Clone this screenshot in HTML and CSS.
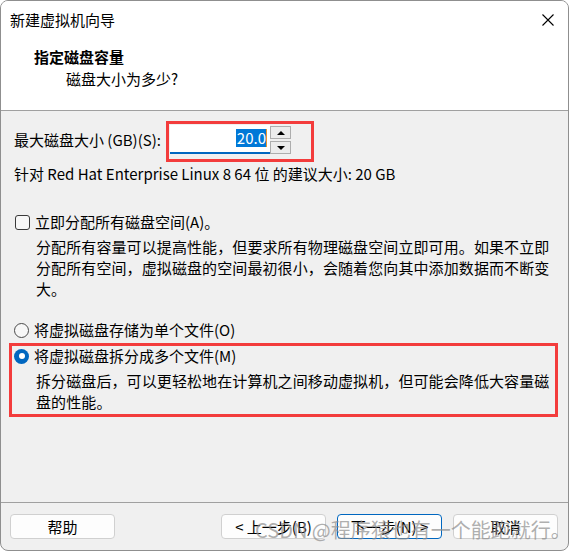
FILE: index.html
```html
<!DOCTYPE html>
<html lang="zh-CN">
<head>
<meta charset="utf-8">
<title>新建虚拟机向导</title>
<link rel="stylesheet" href="styles.css">
</head>
<body>
<div class="window">
  <div class="header">
    <div class="titlebar">
      <span class="title">新建虚拟机向导</span>
      <svg class="close" width="12" height="12" viewBox="0 0 12 12"><path d="M0.5 0.5L11.5 11.5M11.5 0.5L0.5 11.5" stroke="#000" stroke-width="1.1" fill="none"/></svg>
    </div>
    <div class="heading">指定磁盘容量</div>
    <div class="subheading">磁盘大小为多少?</div>
  </div>

  <div class="body">
    <div class="size-row">
      <span class="size-label">最大磁盘大小 (GB)(S):</span>
      <div class="spin">
        <div class="spin-input"><span class="sel">20.0</span><span class="caret"></span></div>
        <div class="spin-btns">
          <div class="spin-btn"><span class="tri-up"></span></div>
          <div class="spin-btn"><span class="tri-down"></span></div>
        </div>
        <div class="mark mark-spin"></div>
      </div>
    </div>

    <div class="recommend">针对 Red Hat Enterprise Linux 8 64 位 的建议大小: 20 GB</div>

    <div class="option check-row"><span class="checkbox"></span><span>立即分配所有磁盘空间(A)。</span></div>
    <p class="desc">分配所有容量可以提高性能，但要求所有物理磁盘空间立即可用。如果不立即<br>分配所有空间，虚拟磁盘的空间最初很小，会随着您向其中添加数据而不断变<br>大。</p>

    <div class="option radio-row first-radio"><span class="radio"></span><span>将虚拟磁盘存储为单个文件(O)</span></div>

    <div class="group">
      <div class="option radio-row"><span class="radio checked"></span><span>将虚拟磁盘拆分成多个文件(M)</span></div>
      <p class="desc desc-split">拆分磁盘后，可以更轻松地在计算机之间移动虚拟机，但可能会降低大容量磁<br>盘的性能。</p>
      <div class="mark mark-group"></div>
    </div>
  </div>

  <div class="footer">
    <button class="btn">帮助</button>
    <div class="spacer"></div>
    <button class="btn">&lt; 上一步(B)</button>
    <button class="btn primary">下一步(N) &gt;</button>
    <button class="btn">取消</button>
    <div class="watermark">CSDN @程序猿也有一个能跑就行。</div>
  </div>
</div>
</body>
</html>
```

FILE: styles.css
```css
* { box-sizing: border-box; }

html, body {
  margin: 0;
  padding: 0;
  background: #ffffff;
}

body {
  font-family: "Noto Sans CJK SC", "Noto Sans", sans-serif;
  font-size: 15px;
  color: #000;
}

.window {
  width: 569px;
  height: 551px;
  border: 1px solid #8f8f8f;
  border-radius: 8px;
  overflow: hidden;
  display: flex;
  flex-direction: column;
  background: #f0f0f0;
}

/* header */
.header {
  flex: none;
  height: 110px;
  background: #ffffff;
  border-bottom: 1px solid #a0a0a0;
}

.titlebar {
  height: 38px;
  display: flex;
  align-items: center;
  justify-content: space-between;
  padding: 0 14px 0 9px;
}

.title {
  line-height: 20px;
}

.close {
  display: block;
}

.heading {
  margin-top: 7px;
  padding-left: 33px;
  line-height: 22px;
  font-weight: bold;
}

.subheading {
  padding-left: 65px;
  line-height: 22px;
}

/* body */
.body {
  flex: 1;
  padding: 14px 0 0 13px;
}

.size-row {
  display: flex;
  align-items: center;
  height: 29px;
}

.size-label {
  width: 156px;
  line-height: 20px;
}

.spin {
  position: relative;
  display: flex;
  height: 29px;
}

.spin-input {
  width: 100px;
  height: 29px;
  background: #ffffff;
  border-bottom: 2px solid #0067c0;
  display: flex;
  justify-content: flex-end;
  align-items: center;
  padding: 0 3px 1px 0;
}

.sel {
  background: #0078d7;
  color: #ffffff;
  line-height: 18px;
  padding: 0 0 0 1px;
}

.caret {
  width: 1px;
  height: 18px;
  background: #e8932c;
}

.spin-btns {
  width: 21px;
  display: flex;
  flex-direction: column;
  gap: 2px;
  padding-top: 1px;
}

.spin-btn {
  height: 13px;
  border: 1px solid #adadad;
  background: #ececec;
  display: flex;
  align-items: center;
  justify-content: center;
}

.tri-up {
  width: 0;
  height: 0;
  border-left: 4px solid transparent;
  border-right: 4px solid transparent;
  border-bottom: 4px solid #000;
}

.tri-down {
  width: 0;
  height: 0;
  border-left: 4px solid transparent;
  border-right: 4px solid transparent;
  border-top: 4px solid #000;
}

.mark {
  position: absolute;
  border: 3px solid #f33c3c;
  pointer-events: none;
}

.mark-spin {
  left: -4px;
  top: -4px;
  width: 148px;
  height: 41px;
}

.recommend {
  margin-top: 10px;
  line-height: 20px;
}

.option {
  display: flex;
  align-items: center;
  line-height: 20px;
}

.check-row {
  margin-top: 28px;
}

.checkbox {
  width: 15px;
  height: 15px;
  border: 1px solid #3a3a3a;
  border-radius: 3px;
  background: #f7f7f7;
  margin: 0 5px 0 1px;
  flex: none;
}

.desc {
  margin: 4px 0 0 0;
  padding-left: 22px;
  line-height: 21px;
  letter-spacing: 0.1px;
}

.radio-row .radio {
  width: 15px;
  height: 15px;
  border-radius: 50%;
  border: 1px solid #4a4a4a;
  background: #f7f7f7;
  margin: 0 5px 0 0;
  flex: none;
}

.radio.checked {
  border: none;
  background: #0067c0;
  display: flex;
  align-items: center;
  justify-content: center;
}

.radio.checked::after {
  content: "";
  width: 6px;
  height: 6px;
  border-radius: 50%;
  background: #ffffff;
}

.first-radio {
  margin-top: 21px;
}

.group {
  position: relative;
  margin-top: 6px;
}

.mark-group {
  left: -5px;
  top: -3px;
  right: 10px;
  bottom: -5px;
}

/* footer */
.footer {
  position: relative;
  flex: none;
  height: 48px;
  border-top: 1px solid #a0a0a0;
  display: flex;
  align-items: flex-start;
  gap: 11px;
  padding: 11px 10px 0 9px;
}

.spacer {
  flex: 1;
}

.btn {
  width: 105px;
  height: 25px;
  border: 1px solid #d0d0d0;
  border-radius: 4px;
  background: #fdfdfd;
  font-family: "Noto Sans CJK SC", "Noto Sans", sans-serif;
  font-size: 15px;
  line-height: 21px;
  color: #000;
  padding: 0;
}

.btn.primary {
  border-color: #0067c0;
}

.watermark {
  position: absolute;
  left: 254px;
  top: 15px;
  font-size: 20px;
  line-height: 24px;
  white-space: nowrap;
  color: rgba(140, 140, 140, 0.7);
  pointer-events: none;
}
```
